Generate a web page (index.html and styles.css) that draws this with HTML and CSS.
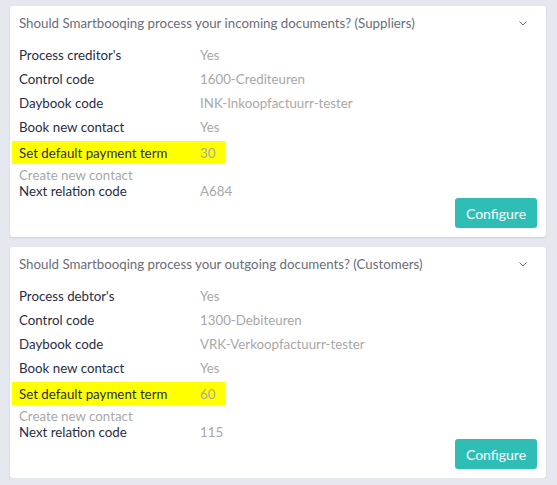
FILE: index.html
```html
<!DOCTYPE html>
<html>
<head>
<meta charset="utf-8">
<link rel="stylesheet" href="styles.css">
</head>
<body>
<div class="page">
  <section class="card">
    <div class="card-head">
      <span class="title">Should Smartbooqing process your incoming documents? (Suppliers)</span>
      <svg class="chev" width="8" height="5" viewBox="0 0 8 5"><path d="M0.5 0.5 L4 4 L7.5 0.5" fill="none" stroke="#6b7080" stroke-width="1"/></svg>
    </div>
    <div class="rows">
      <div class="row"><span class="label">Process creditor's</span><span class="value">Yes</span></div>
      <div class="row"><span class="label">Control code</span><span class="value">1600-Crediteuren</span></div>
      <div class="row"><span class="label">Daybook code</span><span class="value">INK-Inkoopfactuurr-tester</span></div>
      <div class="row"><span class="label">Book new contact</span><span class="value">Yes</span></div>
      <div class="row hl"><span class="label">Set default payment term</span><span class="value">30</span></div>
    </div>
    <div class="sub">
      <div class="sub-title">Create new contact</div>
      <div class="row tight"><span class="label">Next relation code</span><span class="value">A684</span></div>
    </div>
    <div class="actions"><button class="btn">Configure</button></div>
  </section>
  <section class="card">
    <div class="card-head">
      <span class="title">Should Smartbooqing process your outgoing documents? (Customers)</span>
      <svg class="chev" width="8" height="5" viewBox="0 0 8 5"><path d="M0.5 0.5 L4 4 L7.5 0.5" fill="none" stroke="#6b7080" stroke-width="1"/></svg>
    </div>
    <div class="rows">
      <div class="row"><span class="label">Process debtor's</span><span class="value">Yes</span></div>
      <div class="row"><span class="label">Control code</span><span class="value">1300-Debiteuren</span></div>
      <div class="row"><span class="label">Daybook code</span><span class="value">VRK-Verkoopfactuurr-tester</span></div>
      <div class="row"><span class="label">Book new contact</span><span class="value">Yes</span></div>
      <div class="row hl"><span class="label">Set default payment term</span><span class="value">60</span></div>
    </div>
    <div class="sub">
      <div class="sub-title">Create new contact</div>
      <div class="row tight"><span class="label">Next relation code</span><span class="value">115</span></div>
    </div>
    <div class="actions"><button class="btn">Configure</button></div>
  </section>
</div>
</body>
</html>
```
FILE: styles.css
```css
html, body {
  margin: 0;
  padding: 0;
  background: #e5e8ef;
}
body {
  font-family: Lato, "Open Sans", sans-serif;
  font-size: 13.3px;
  color: #2a2d45;
}
.page {
  display: flex;
  flex-direction: column;
  gap: 10px;
  padding: 6px 11px 0 10px;
}
.card {
  background: #fff;
  border-radius: 3px;
  box-shadow: 0 1px 2px rgba(0,0,0,0.12);
  padding: 0 9px 9px 9px;
}
.card-head {
  height: 33px;
  display: flex;
  align-items: center;
  justify-content: space-between;
}
.title {
  color: #6b6d78;
}
.chev {
  margin-right: 10px;
  margin-top: 2px;
}
.rows {
  margin-top: 4px;
  display: flex;
  flex-direction: column;
}
.row {
  display: flex;
  height: 24px;
  align-items: center;
}
.label {
  width: 181px;
  flex: none;
}
.value {
  color: #a8a8a8;
}
.row.hl {
  align-self: flex-start;
  display: inline-flex;
  background: #ffff00;
  margin-left: -7px;
  padding: 0 10px 0 7px;
  height: 23px;
  margin-top: 2px;
}
.sub {
  margin-top: 4px;
}
.sub-title {
  color: #a8a8a8;
  line-height: 15px;
}
.row.tight {
  height: 15px;
}
.actions {
  display: flex;
  justify-content: flex-end;
}
.btn {
  font-family: inherit;
  font-size: 14px;
  color: #fff;
  background: #2ebeb5;
  border: none;
  border-radius: 3px;
  width: 82px;
  height: 30px;
  padding: 0;
}
```
